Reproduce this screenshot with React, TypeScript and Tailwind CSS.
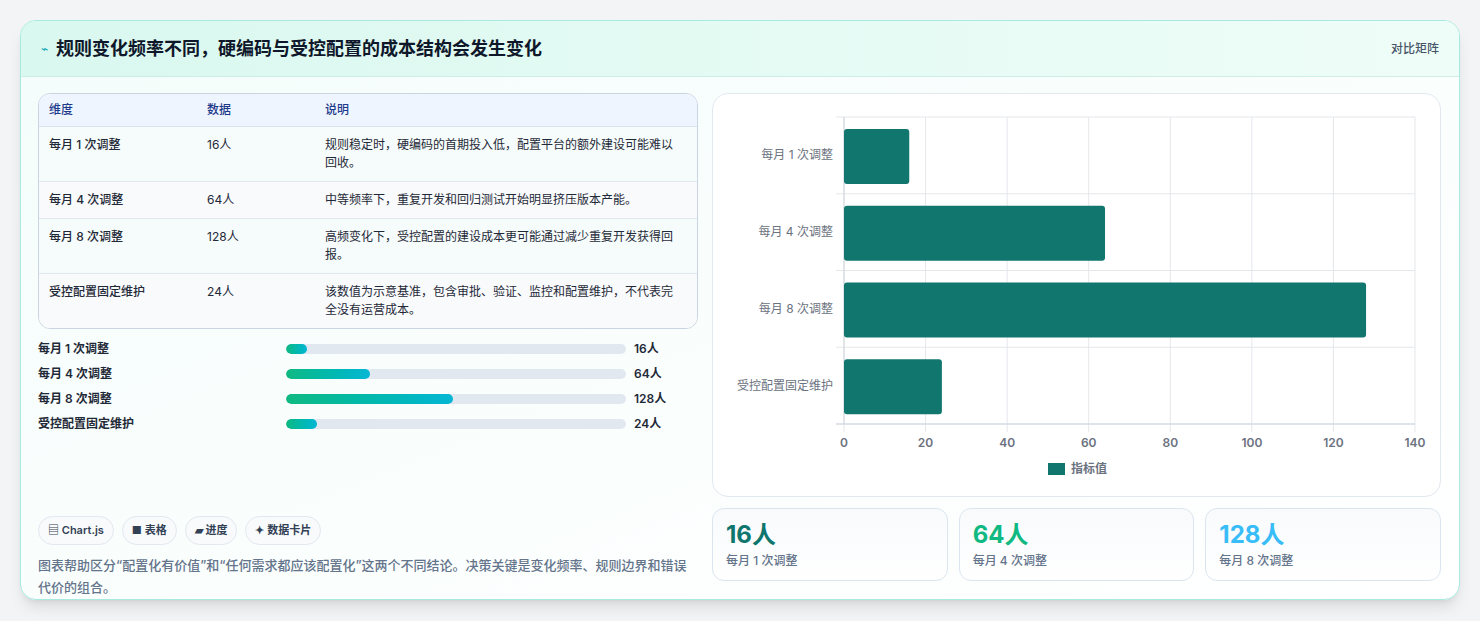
const rows = [
  { name: '每月 1 次调整', value: 16, desc: '规则稳定时，硬编码的首期投入低，配置平台的额外建设可能难以回收。' },
  { name: '每月 4 次调整', value: 64, desc: '中等频率下，重复开发和回归测试开始明显挤压版本产能。' },
  { name: '每月 8 次调整', value: 128, desc: '高频变化下，受控配置的建设成本更可能通过减少重复开发获得回报。' },
  { name: '受控配置固定维护', value: 24, desc: '该数值为示意基准，包含审批、验证、监控和配置维护，不代表完全没有运营成本。' },
]

const font = { fontFamily: 'Inter, "Noto Sans CJK SC", sans-serif' }

function Chart() {
  const x0 = 131
  const w = 571
  const y0 = 23
  const band = 76.75
  return (
    <svg width="727" height="402" className="block">
      {[0, 20, 40, 60, 80, 100, 120, 140].map((t, i) => {
        const x = x0 + (w * i) / 7
        return (
          <g key={t}>
            <line x1={x} y1={y0} x2={x} y2={y0 + band * 4 + 8} stroke="#e5e7eb" />
            <text x={x} y={353} textAnchor="middle" fontSize="12" fill="#6b7280" fontWeight="600">{t}</text>
          </g>
        )
      })}
      {[0, 1, 2, 3, 4].map(i => (
        <line key={i} x1={x0 - 8} y1={y0 + band * i} x2={x0 + w} y2={y0 + band * i} stroke="#e5e7eb" />
      ))}
      <line x1={x0} y1={y0} x2={x0} y2={y0 + band * 4} stroke="#d1d5db" />
      <line x1={x0 - 8} y1={y0 + band * 4} x2={x0 + w} y2={y0 + band * 4} stroke="#cbd5e1" />
      {rows.map((r, i) => (
        <g key={r.name}>
          <rect x={x0} y={y0 + band * i + 12} width={(r.value / 140) * w} height={55} rx="3" fill="#10766e" />
          <text x={120} y={y0 + band * i + band / 2 + 4} textAnchor="end" fontSize="12" fill="#6b7280">{r.name}</text>
        </g>
      ))}
      <rect x={335} y={369} width={17} height={12} fill="#10766e" />
      <text x={358} y={379} fontSize="12" fill="#6b7280" fontWeight="600">指标值</text>
    </svg>
  )
}

export default function App() {
  return (
    <div className="min-h-[621px] bg-[#f3f4f6] px-5 pt-5" style={font}>
      <div className="rounded-2xl border border-[#a7eadf] bg-gradient-to-br from-[#f4fdfb] to-white shadow-lg overflow-hidden h-[580px]">
        <div className="h-14 flex items-center justify-between px-5 bg-gradient-to-r from-[#d9f8ef] to-[#effdf8] border-b border-[#cdeee6]">
          <div className="flex items-center gap-2">
            <span className="text-[#0ea5b7] text-xs">⌁</span>
            <h1 className="text-lg font-bold text-[#0f172a]">规则变化频率不同，硬编码与受控配置的成本结构会发生变化</h1>
          </div>
          <span className="text-xs text-[#475569] font-medium">对比矩阵</span>
        </div>
        <div className="flex gap-[14px] pl-[17px] pr-[18px] pt-4">
          <div className="w-[660px] flex flex-col">
            <div className="rounded-xl border border-[#cbd5e1] overflow-hidden text-xs text-[#1f2937] bg-[#f9fbfd]">
              <div className="grid grid-cols-[158px_118px_1fr] bg-[#eef5ff] text-[#1e3a8a] font-medium h-[33px] items-center px-[10px] border-b border-[#dbe3ee]">
                <span>维度</span><span>数据</span><span>说明</span>
              </div>
              {rows.map((r, i) => (
                <div key={r.name} className={`grid grid-cols-[158px_118px_1fr] px-[10px] py-[9px] leading-[18px] ${i < 3 ? 'border-b border-[#e2e8f0]' : ''} ${i % 2 ? 'bg-[#f8fafc]' : 'bg-[#f6fcfb]'}`}>
                  <span className="font-medium">{r.name}</span>
                  <span>{r.value}人</span>
                  <span className="pr-1">{r.desc}</span>
                </div>
              ))}
            </div>
            <div className="flex flex-col gap-[7px] mt-[11px]">
              {rows.map(r => (
                <div key={r.name} className="flex items-center text-xs font-semibold text-[#1f2937] h-[18px]">
                  <span className="w-[248px]">{r.name}</span>
                  <div className="w-[340px] h-[10px] rounded-full bg-[#e2e8f0] overflow-hidden">
                    <div className="h-full rounded-full bg-gradient-to-r from-[#10b981] to-[#06b6d4]" style={{ width: `${(r.value / 260) * 100}%` }} />
                  </div>
                  <span className="ml-2">{r.value}人</span>
                </div>
              ))}
            </div>
            <div className="flex gap-2 mt-[83px] text-[11px] font-semibold text-[#334155]">
              {['▤ Chart.js', '■ 表格', '▰ 进度', '✦ 数据卡片'].map(c => (
                <span key={c} className="h-[29px] px-[9px] flex items-center rounded-full border border-[#e2e8f0] bg-[#f8fafc]">{c}</span>
              ))}
            </div>
            <p className="mt-[9px] text-[13px] leading-[22px] text-[#64748b] font-medium">
              图表帮助区分“配置化有价值”和“任何需求都应该配置化”这两个不同结论。决策关键是变化频率、规则边界和错误代价的组合。
            </p>
          </div>
          <div className="flex-1 flex flex-col gap-[11px]">
            <div className="h-[404px] rounded-2xl border border-[#e2e8f0] bg-white">
              <Chart />
            </div>
            <div className="grid grid-cols-3 gap-[11px]">
              {[
                { v: '16人', l: '每月 1 次调整', c: 'text-[#0f766e]' },
                { v: '64人', l: '每月 4 次调整', c: 'text-[#10b981]' },
                { v: '128人', l: '每月 8 次调整', c: 'text-[#38bdf8]' },
              ].map(s => (
                <div key={s.v} className="h-[73px] rounded-xl border border-[#dbe5f0] bg-gradient-to-b from-[#f8fafc] to-white px-[13px] pt-[10px]">
                  <div className={`text-[24px] font-bold leading-8 ${s.c}`}>{s.v}</div>
                  <div className="text-xs text-[#64748b] font-medium mt-[2px]">{s.l}</div>
                </div>
              ))}
            </div>
          </div>
        </div>
      </div>
    </div>
  )
}
